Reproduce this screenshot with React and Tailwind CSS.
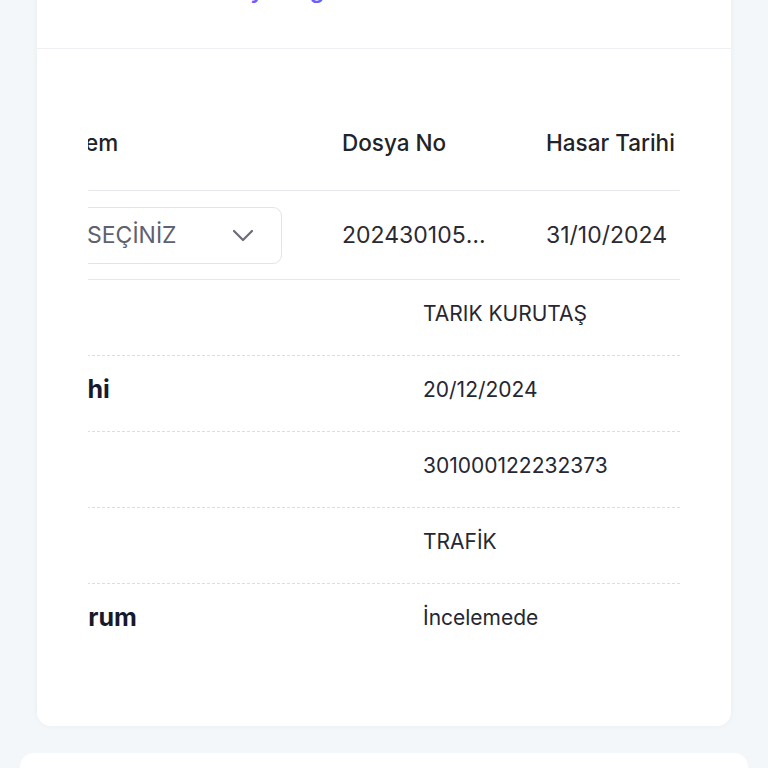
import React from "react";

const details = [
  { label: "Sürücü", value: "TARIK KURUTAŞ" },
  { label: "Kayıt Tarihi", value: "20/12/2024" },
  { label: "Poliçe", value: "301000122232373" },
  { label: "Branş", value: "TRAFİK" },
  { label: "Dosya Durum", value: "İncelemede" },
];

export default function App() {
  return (
    <div
      className="min-h-[768px] w-full overflow-hidden bg-[#f4f7fa]"
      style={{ fontFamily: "Inter, 'Noto Sans', sans-serif" }}
    >
      <div className="mx-[37px] mt-[-80px] rounded-[14px] bg-white shadow-[0_0_6px_rgba(0,0,0,0.04)]">
        <div className="border-b border-[#eff0f3] pl-[170px] pt-[54px] pb-[42px]">
          <div className="text-[23px] font-semibold leading-[32px] text-[#6d5dfc]">
            Dosya Bilgileri
          </div>
        </div>
        <div className="px-[51px] pt-[47px] pb-[66px]">
          <div className="overflow-hidden">
            <div className="ml-[-22px] w-[720px]">
              <div className="flex h-[95px] items-center border-b border-[#e6e7ea] text-[22.5px] font-medium text-[#222228]">
                <div className="ml-[-5px] w-[261px]">İşlem</div>
                <div className="w-[204px] pl-[20px]">Dosya No</div>
                <div className="flex-1 pl-[20px]">Hasar Tarihi</div>
              </div>
              <div className="flex h-[89px] items-center border-b border-[#e6e7ea] text-[23px] text-[#2a2a33]">
                <div className="w-[256px]">
                  <div className="ml-[-20px] flex h-[57px] w-[236px] items-center justify-between rounded-[9px] border border-[#e3e4e8] pl-[40px] pr-[27px] text-[#5f6070]">
                    <span>SEÇİNİZ</span>
                    <svg width="22" height="13" viewBox="0 0 22 13" fill="none" stroke="#6b6c7a" strokeWidth="2.2" strokeLinecap="round" strokeLinejoin="round">
                      <path d="M2 2l9 9 9-9" />
                    </svg>
                  </div>
                </div>
                <div className="w-[204px] pl-[20px]">
                  <div className="w-[150px] overflow-hidden text-ellipsis whitespace-nowrap">2024301051234</div>
                </div>
                <div className="flex-1 pl-[20px]">31/10/2024</div>
              </div>
            </div>
          </div>
          <div className="overflow-hidden">
            <div className="ml-[-116px]">
              {details.map((d, i) => (
                <div
                  key={d.label}
                  className={`flex h-[76px] items-center ${i < details.length - 1 ? "border-b-[1.5px] border-dashed border-[#dcdde2]" : ""}`}
                >
                  <div className="w-[433px] pb-[8px] text-[25px] font-bold text-[#171a2c]">{d.label}</div>
                  <div className="flex-1 pb-[8px] pl-[18px] text-[21px] text-[#262733]">{d.value}</div>
                </div>
              ))}
            </div>
          </div>
        </div>
      </div>
      <div className="mx-[20px] mt-[27px] h-[200px] rounded-[14px] bg-white" />
    </div>
  );
}
